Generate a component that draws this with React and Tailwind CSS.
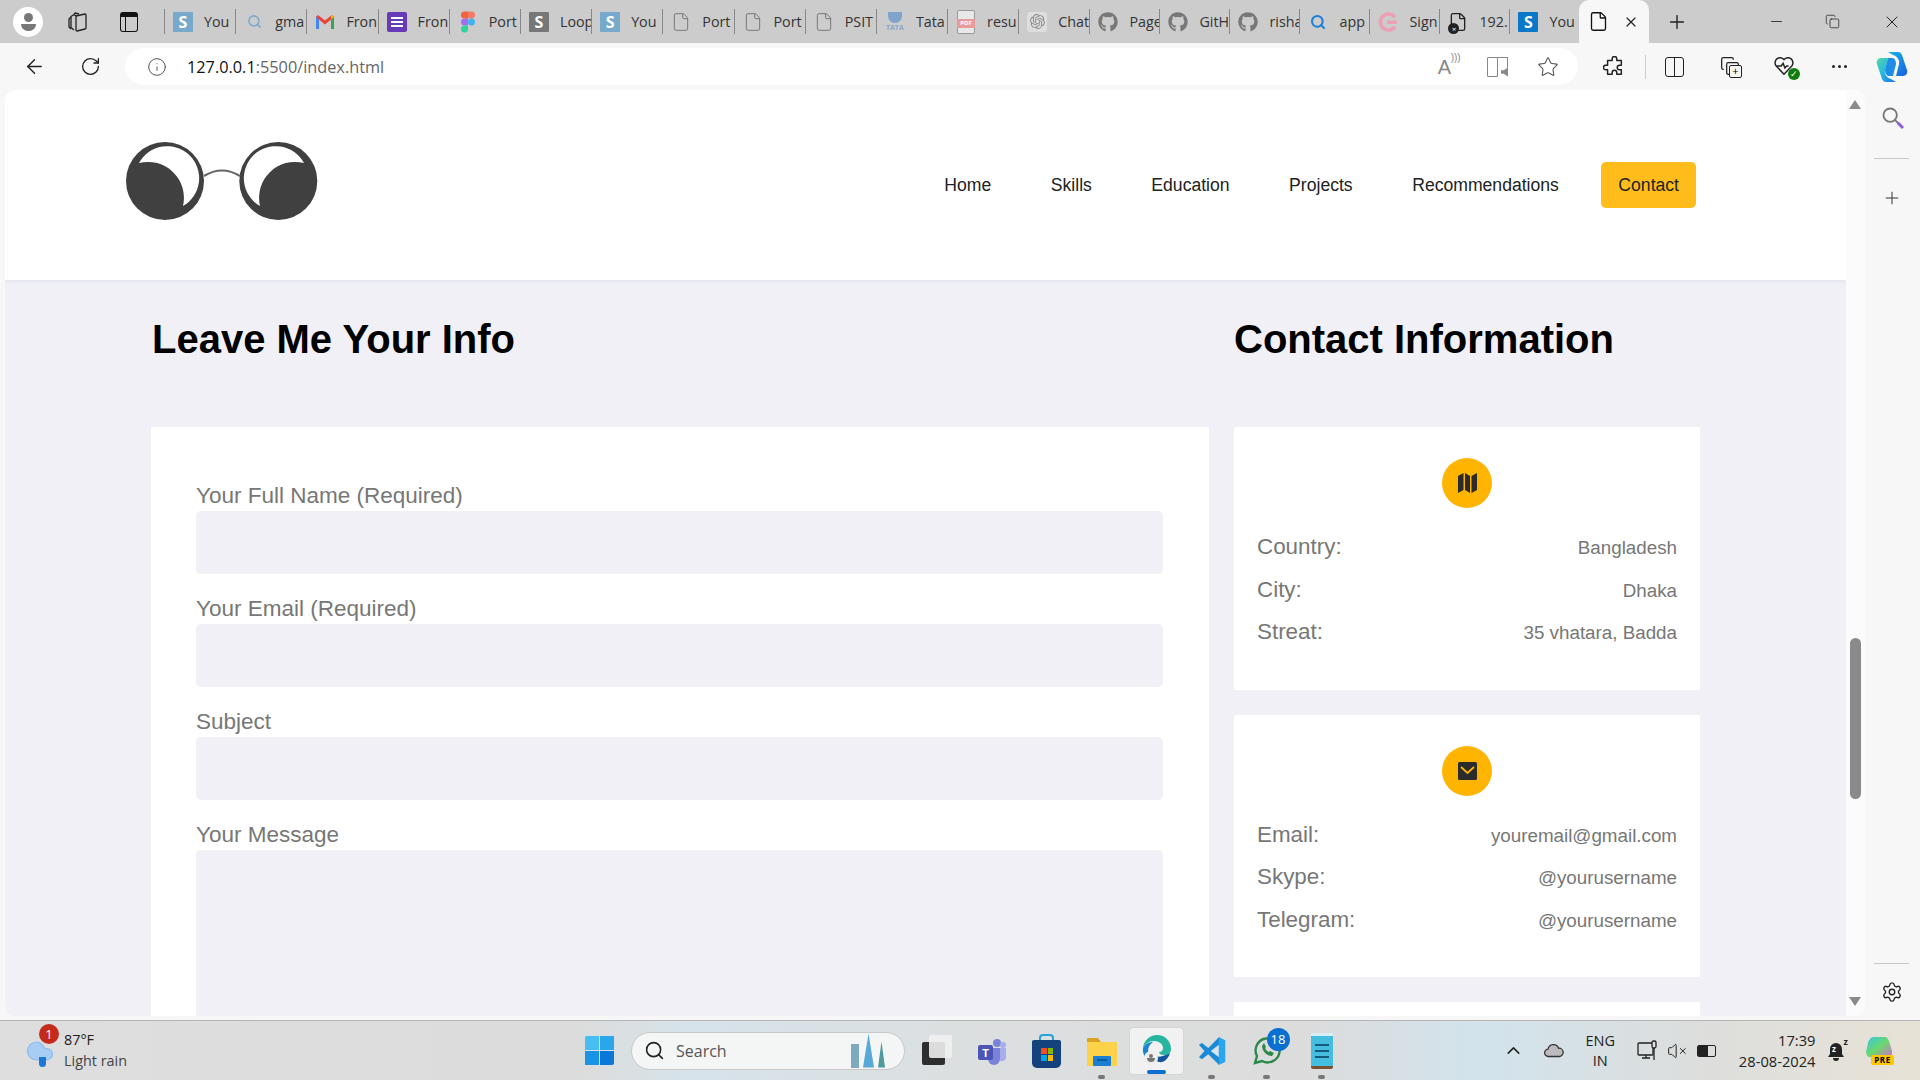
import { ArrowLeft, RotateCw, Info, Star, Plus, Minus, X, Settings, Search, File, ChevronUp, Cloud, VolumeX, Copy } from 'lucide-react'
import { FaGithub } from 'react-icons/fa'
import { SiOpenai } from 'react-icons/si'

const UI_FONT = "font-['Open_Sans','Noto_Sans',sans-serif]"

const STile = ({ bg }) => (
  <span className={`w-5 h-5 flex items-center justify-center text-white font-bold text-[16px] leading-none rounded-[1px] ${bg}`}>S</span>
)

const Gmail = () => (
  <svg width="20" height="20" viewBox="0 0 20 20" fill="none">
    <path d="M1 17V4.500L4 4v13z" fill="#4285f4" />
    <path d="M16 17V4l3 .5V17z" fill="#34a853" />
    <path d="M1 5l2-2 7 5.500L17 3l2 2-9 7.500z" fill="#ea4335" />
    <path d="M16 4l1-1 2 2-3 2.500z" fill="#fbbc04" />
  </svg>
)

const ListIcon = () => (
  <span className="w-5 h-5 rounded-[2px] bg-[#673ab7] flex flex-col items-center justify-center gap-[2px]">
    <span className="w-3 h-[2px] bg-white" />
    <span className="w-3 h-[2px] bg-white" />
    <span className="w-3 h-[2px] bg-white" />
  </span>
)

const FigmaIcon = () => (
  <svg width="14" height="22" viewBox="0 0 14 21">
    <path d="M7 0H3.500a3.500 3.500 0 0 0 0 7H7z" fill="#f0643c" />
    <path d="M7 0h3.500a3.500 3.500 0 0 1 0 7H7z" fill="#f47a6c" />
    <path d="M7 7H3.500a3.500 3.500 0 0 0 0 7H7z" fill="#a66cf0" />
    <circle cx="10.500" cy="10.500" r="3.500" fill="#3db4f0" />
    <path d="M7 14H3.500A3.500 3.500 0 1 0 7 17.500z" fill="#2ed598" />
  </svg>
)

const TataIcon = () => (
  <span className="w-5 h-5 flex flex-col items-center leading-none">
    <span className="w-[14px] h-[11px] rounded-b-full bg-[#7fa3cc]" />
    <span className="text-[7px] font-bold text-[#8aa6c8] mt-[1px]">TATA</span>
  </span>
)

const PdfIcon = () => (
  <span className="relative w-[18px] h-[24px] border border-[#999] bg-[#e8e8e8] rounded-[2px]">
    <span className="absolute left-[-1px] top-[8px] w-[18px] h-[9px] bg-[#e99a9a] text-white text-[6px] font-bold leading-[9px] text-center">PDF</span>
  </span>
)

const SigIcon = () => (
  <svg width="20" height="20" viewBox="0 0 20 20" fill="none">
    <path d="M17 5.500A8 8 0 1 0 17 14.500" stroke="#ee9fb4" strokeWidth="3.600" />
    <rect x="9" y="8.500" width="10" height="3.500" fill="#ee9fb4" />
  </svg>
)

const BlockedDoc = () => (
  <span className="relative w-5 h-6 flex items-center justify-center">
    <File size={20} strokeWidth={1.600} className="text-[#222]" />
    <span className="absolute left-0 bottom-0 w-[11px] h-[11px] rounded-full bg-[#222] text-white text-[8px] leading-[11px] text-center">×</span>
  </span>
)

const grayFile = <File size={20} strokeWidth={1.200} className="text-[#777]" />
const grayGit = <FaGithub size={20} className="text-[#777]" />

const TABS = [
  { icon: <STile bg="bg-[#76a9cb]" />, text: 'You' },
  { icon: <Search size={15} strokeWidth={2.500} className="text-[#82a9cc] mx-[2px]" />, text: 'gma' },
  { icon: <Gmail />, text: 'Fron' },
  { icon: <ListIcon />, text: 'Fron' },
  { icon: <FigmaIcon />, text: 'Port' },
  { icon: <STile bg="bg-[#777777]" />, text: 'Loop' },
  { icon: <STile bg="bg-[#76a9cb]" />, text: 'You' },
  { icon: grayFile, text: 'Port' },
  { icon: grayFile, text: 'Port' },
  { icon: grayFile, text: 'PSIT' },
  { icon: <TataIcon />, text: 'Tata' },
  { icon: <PdfIcon />, text: 'resu' },
  { icon: <span className="w-5 h-5 bg-[#dedede] rounded-[3px] flex items-center justify-center"><SiOpenai size={15} className="text-[#8a8a8a]" /></span>, text: 'Chat' },
  { icon: grayGit, text: 'Page' },
  { icon: grayGit, text: 'GitH' },
  { icon: grayGit, text: 'risha' },
  { icon: <Search size={16} strokeWidth={3} className="text-[#1e7fd8] mx-[2px]" />, text: 'app' },
  { icon: <SigIcon />, text: 'Sign' },
  { icon: <BlockedDoc />, text: '192.' },
  { icon: <STile bg="bg-[#0a78c8]" />, text: 'You' },
]

const Workspaces = () => (
  <svg width="22" height="22" viewBox="0 0 22 22" fill="none" stroke="#222" strokeWidth="1.300" strokeLinejoin="round">
    <path d="M9 5l9-2a1 1 0 0 1 1 1v13a1 1 0 0 1-1 1l-8 2a1 1 0 0 1-1-1z" />
    <path d="M9 5 7 3.500 4 5.500v11l3 2.500M7 3.500l1-1.500 4 1" />
    <path d="M4 6 2 8v8l2 2" />
  </svg>
)

function Tabs() {
  return (
    <div className={`h-[43px] bg-[#cccccc] flex items-center shrink-0 ${UI_FONT}`}>
      <div className="w-[164px] flex items-center shrink-0">
        <div className="ml-[13px] w-[30px] h-[30px] rounded-full bg-white flex flex-col items-center justify-center">
          <span className="w-[9px] h-[9px] rounded-full bg-[#777]" />
          <span className="w-[15px] h-[7px] mt-[2px] rounded-b-full rounded-t-[3px] bg-[#777]" />
        </div>
        <span className="ml-[24px]"><Workspaces /></span>
        <span className="ml-[31px] w-[18px] h-[20px] rounded-[3px] border-[1.500px] border-[#111] border-t-[5px] flex">
          <span className="w-[5px] h-full border-r-[1.500px] border-[#111]" />
        </span>
      </div>
      {TABS.map((t, i) => (
        <div key={i} className={`h-[25px] flex items-center border-l border-[#888] overflow-hidden shrink-0 ${i < 13 ? 'w-[71.2px]' : 'w-[70px]'}`}>
          <span className="w-5 ml-[8px] mr-[11px] flex items-center justify-center shrink-0">{t.icon}</span>
          <span className="text-[14.3px] text-[#333] whitespace-nowrap">{t.text}</span>
        </div>
      ))}
      <div className="w-[70px] h-full bg-[#f7f7f7] rounded-t-[10px] flex items-center shrink-0">
        <File size={21} strokeWidth={1.500} className="ml-[9px] text-[#111]" />
        <X size={16} strokeWidth={1.800} className="ml-[14px] text-[#222]" />
      </div>
      <Plus size={22} strokeWidth={1.500} className="ml-[17px] text-[#222]" />
      <Minus size={17} strokeWidth={1.200} className="ml-[80px] text-[#222]" />
      <Copy size={15} strokeWidth={1.200} className="ml-[40px] text-[#222]" />
      <X size={20} strokeWidth={1.200} className="ml-[42px] text-[#222]" />
    </div>
  )
}

const CopilotLogo = () => (
  <svg width="34" height="34" viewBox="0 0 34 34">
    <defs>
      <linearGradient id="cpa" x1="0" y1="0" x2="1" y2="1">
        <stop offset="0" stopColor="#19b8e8" />
        <stop offset="1" stopColor="#1a5fe0" />
      </linearGradient>
      <linearGradient id="cpb" x1="0" y1="0" x2="1" y2="1">
        <stop offset="0" stopColor="#4fdc9e" />
        <stop offset="0.500" stopColor="#25b4ea" />
        <stop offset="1" stopColor="#1f6fe8" />
      </linearGradient>
    </defs>
    <path d="M13 2h10c2 0 3 1 4 3l5 15c1 3-1 6-4 6h-7l3-12c1-4-2-8-6-9z" fill="url(#cpa)" />
    <path d="M21 32H11c-2 0-3-1-4-3L2 14c-1-3 1-6 4-6h7l-3 12c-1 4 2 8 6 9z" fill="url(#cpb)" />
    <path d="M13 8h5c2 1 3 3 3 6l-3 12h-5c-2-1-3-3-3-6z" fill="#1f8ce8" />
  </svg>
)

function Toolbar() {
  return (
    <div className={`h-[47px] bg-[#f7f7f7] flex items-center shrink-0 ${UI_FONT}`}>
      <ArrowLeft size={23} strokeWidth={1.500} className="ml-[23px] text-[#222]" />
      <RotateCw size={21} strokeWidth={1.500} className="ml-[34px] text-[#222]" />
      <div className="ml-[24px] w-[1453px] h-[37px] bg-white rounded-full flex items-center shrink-0">
        <Info size={20} strokeWidth={1.200} className="ml-[22px] text-[#555]" />
        <span className="ml-[20px] mt-[2px] text-[16.3px] text-[#111]">127.0.0.1<span className="text-[#666]">:5500/index.html</span></span>
        <span className="ml-auto mr-[36px] relative text-[20px] text-[#888] font-['Liberation_Sans',sans-serif]">A<span className="absolute top-[-2px] left-[13px] text-[10px]">)))</span></span>
        <span className="mr-[28px] relative w-[22px] h-[20px] flex">
          <span className="w-[11px] h-full border border-[#888] rounded-l-[1px]" />
          <span className="w-[10px] h-[12px] border-t border-r border-[#888]" />
          <span className="absolute right-[1px] bottom-0 w-[7px] h-[9px] bg-[#888] [clip-path:polygon(0_30%,40%_30%,100%_0,100%_100%,40%_70%,0_70%)]" />
        </span>
        <Star size={22} strokeWidth={1.200} className="mr-[19px] text-[#555]" />
      </div>
      <svg className="ml-[25px]" width="22" height="22" viewBox="0 0 24 24" fill="none" stroke="#222" strokeWidth="1.600" strokeLinejoin="round">
        <path d="M10 3a2.500 2.500 0 0 1 5 0v2h5v5h-2a2.500 2.500 0 0 0 0 5h2v5h-5v-2a2.500 2.500 0 0 0-5 0v2H5v-5H3a2.500 2.500 0 0 1 0-5h2V5h5z" />
      </svg>
      <span className="ml-[20px] w-[1px] h-[24px] bg-[#ccc]" />
      <span className="ml-[19px] w-[19px] h-[20px] border-[1.500px] border-[#222] rounded-[3px] flex">
        <span className="w-1/2 border-r-[1.500px] border-[#222]" />
      </span>
      <span className="ml-[36px] relative w-[22px] h-[22px]">
        <Copy size={20} strokeWidth={1.500} className="absolute text-[#222]" />
        <span className="absolute right-0 bottom-0 w-[13px] h-[13px] bg-[#f7f7f7] border-[1.500px] border-[#222] rounded-[2px] text-[11px] leading-[9px] text-center">+</span>
      </span>
      <span className="ml-[31px] relative w-[24px] h-[24px]">
        <svg width="22" height="22" viewBox="0 0 24 24" fill="none" stroke="#222" strokeWidth="1.600">
          <path d="M12 21 3.500 12a5.500 5.500 0 0 1 8.500-7 5.500 5.500 0 0 1 8.500 7z" />
          <path d="M4 12h5l2-3 2 5 2-2h2" />
        </svg>
        <span className="absolute right-[-3px] bottom-[-1px] w-[12px] h-[12px] rounded-full bg-[#107c10] text-white text-[9px] leading-[12px] text-center">✓</span>
      </span>
      <span className="ml-[35px] flex gap-[3px]">
        <span className="w-[3px] h-[3px] rounded-full bg-[#222]" />
        <span className="w-[3px] h-[3px] rounded-full bg-[#222]" />
        <span className="w-[3px] h-[3px] rounded-full bg-[#222]" />
      </span>
      <span className="ml-[28px]"><CopilotLogo /></span>
    </div>
  )
}

const Logo = () => (
  <svg width="194" height="80" viewBox="0 0 194 80" fill="none">
    <circle cx="40" cy="40" r="39" fill="#404040" />
    <path d="M14 22 A32 32 0 1 1 58 65 A36 36 0 0 0 14 22Z" fill="#fff" />
    <circle cx="153.300" cy="40" r="39" fill="#404040" />
    <path d="M179 22 A32 32 0 1 0 135 65 A36 36 0 0 1 179 22Z" fill="#fff" />
    <path d="M79 35 Q97 24 115 35" stroke="#666" strokeWidth="2.200" />
  </svg>
)

const NAV = ['Home', 'Skills', 'Education', 'Projects', 'Recommendations']

function Header() {
  return (
    <header className="h-[190px] bg-white flex items-start pl-[120px] pr-[150px] shrink-0 shadow-[0_1px_4px_rgba(90,110,200,0.12)] relative">
      <div className="mt-[51px]"><Logo /></div>
      <nav className="ml-auto mt-[72px] flex items-center gap-[25.500px] text-[17.6px] text-[#222]">
        {NAV.map((n) => (
          <a key={n} className="px-[17px] leading-[46px]">{n}</a>
        ))}
        <a className="px-[17px] leading-[46px] bg-[#ffbc1a] rounded-[5px]">Contact</a>
      </nav>
    </header>
  )
}

const FIELDS = ['Your Full Name (Required)', 'Your Email (Required)', 'Subject', 'Your Message']

function FormCard() {
  return (
    <div className="w-[1058px] bg-white px-[45px] pt-[56px] pb-[40px] shrink-0">
      {FIELDS.map((f, i) => (
        <div key={f} className="mb-[22px]">
          <label className="block text-[22.500px] leading-[26px] mb-[2px] text-[#777777]">{f}</label>
          <div className={`w-[967px] bg-[#f0f0f6] rounded-[5px] ${i === 3 ? 'h-[240px]' : 'h-[63px]'}`} />
        </div>
      ))}
    </div>
  )
}

const MapGlyph = () => (
  <svg width="19" height="20" viewBox="0 0 19 20" fill="#2b2b2b">
    <path d="M0 3l5.500-3v17L0 20zM7 0l5 3v17l-5-3zM13.500 3 19 0v17l-5.500 3z" />
  </svg>
)

const MailGlyph = () => (
  <svg width="19" height="18" viewBox="0 0 19 18">
    <rect width="19" height="18" rx="1.500" fill="#2b2b2b" />
    <path d="M3 5l6.500 6L16 5" stroke="#ffb400" strokeWidth="1.800" fill="none" />
  </svg>
)

const CARDS = [
  {
    icon: <MapGlyph />,
    rows: [['Country:', 'Bangladesh'], ['City:', 'Dhaka'], ['Streat:', '35 vhatara, Badda']],
  },
  {
    icon: <MailGlyph />,
    rows: [['Email:', 'youremail@gmail.com'], ['Skype:', '@yourusername'], ['Telegram:', '@yourusername']],
  },
]

function InfoCard({ icon, rows }) {
  return (
    <div className="h-[262.500px] bg-white pt-[31px] px-[23px]">
      <div className="w-[50px] h-[50px] mx-auto rounded-full bg-[#ffb400] flex items-center justify-center">{icon}</div>
      <div className="mt-[18px]">
        {rows.map(([k, v]) => (
          <div key={k} className="h-[42.500px] flex items-center justify-between">
            <span className="text-[22.400px] text-[#777777]">{k}</span>
            <span className="text-[18.800px] text-[#777777] mt-[2px]">{v}</span>
          </div>
        ))}
      </div>
    </div>
  )
}

function Page() {
  return (
    <main className="flex-1 min-w-0 h-full overflow-hidden flex flex-col font-['Liberation_Sans',sans-serif]">
      <Header />
      <section className="flex-1 bg-[#f0f0f6] pl-[146px] overflow-hidden">
        <div className="flex gap-[25px]">
          <div className="w-[1058px]">
            <h2 className="ml-[1px] mt-[36px] h-[111px] text-[40px] leading-[46px] font-bold text-black">Leave Me Your Info</h2>
            <FormCard />
          </div>
          <div className="w-[466px]">
            <h2 className="mt-[36px] h-[111px] text-[40px] leading-[46px] font-bold text-black">Contact Information</h2>
            <div className="flex flex-col gap-[25px]">
              {CARDS.map((c) => (
                <InfoCard key={c.rows[0][0]} icon={c.icon} rows={c.rows} />
              ))}
              <div className="h-[262px] bg-white" />
            </div>
          </div>
        </div>
      </section>
    </main>
  )
}

function Scrollbar() {
  return (
    <div className="relative w-[19px] h-full bg-[#fbfbfb] shrink-0">
      <span className="absolute left-[3px] top-[10px] w-0 h-0 border-x-[6px] border-x-transparent border-b-[9px] border-b-[#8a8a8a]" />
      <span className="absolute left-[4px] top-[548px] w-[11px] h-[161px] rounded-full bg-[#8a8a8a]" />
      <span className="absolute left-[3px] bottom-[10px] w-0 h-0 border-x-[6px] border-x-transparent border-t-[9px] border-t-[#8a8a8a]" />
    </div>
  )
}

function Sidebar() {
  return (
    <aside className="w-[55px] h-full bg-[#f7f7f7] flex flex-col items-center pr-[2px] shrink-0">
      <span className="relative mt-[16px] w-[22px] h-[22px]">
        <Search size={20} strokeWidth={2.200} className="text-[#777]" />
        <span className="absolute right-[-1px] bottom-[1px] w-[7px] h-[3px] bg-[#8f5fd6] rotate-45" />
      </span>
      <span className="mt-[30px] w-[35px] h-[1px] bg-[#c8c8c8]" />
      <Plus size={20} strokeWidth={1.200} className="mt-[29px] text-[#333]" />
      <span className="mt-auto w-[35px] h-[1px] bg-[#c8c8c8]" />
      <Settings size={22} strokeWidth={1.500} className="mt-[17px] mb-[17px] text-[#222]" />
    </aside>
  )
}

function WindowsLogo() {
  return (
    <span className="grid grid-cols-2 gap-[1px] w-[29px] h-[29px]">
      <span className="bg-[#48bdf2] rounded-tl-[2px]" />
      <span className="bg-[#2aa7ea]" />
      <span className="bg-[#1a93e4]" />
      <span className="bg-[#0a78d8] rounded-br-[2px]" />
    </span>
  )
}

const TaskView = () => (
  <span className="relative w-[30px] h-[30px] -translate-y-[1px]">
    <span className="absolute left-0 bottom-0 w-[23px] h-[23px] bg-[#2e2e2e] rounded-[2px]" />
    <span className="absolute right-0 top-0 w-[23px] h-[23px] bg-[#f0f0f0]/90 rounded-[2px]" />
  </span>
)

const Teams = () => (
  <svg width="30" height="30" viewBox="0 0 30 30">
    <circle cx="20" cy="7" r="4" fill="#7b83d9" />
    <circle cx="26" cy="9" r="3" fill="#a6acec" />
    <path d="M18 12h11v8a4 4 0 0 1-8 2h-3z" fill="#a6acec" />
    <path d="M11 12h12v11a6 6 0 0 1-12 0z" fill="#7b83d9" />
    <rect x="1" y="9" width="15" height="15" rx="2" fill="#4c54b5" />
    <text x="8.500" y="20.500" fill="#fff" fontSize="11" fontWeight="700" textAnchor="middle" fontFamily="Liberation Sans">T</text>
  </svg>
)

const Store = () => (
  <span className="relative w-[29px] h-[34px]">
    <span className="absolute left-[7px] top-0 w-[15px] h-[10px] rounded-t-[4px] border-2 border-[#27a3dc] border-b-0" />
    <span className="absolute left-0 top-[6px] w-[29px] h-[28px] rounded-b-[5px] rounded-t-[2px] bg-[#14427c]" />
    <span className="absolute left-[9px] top-[14px] grid grid-cols-2 gap-[1px] w-[12px] h-[13px]">
      <span className="bg-[#f25022]" />
      <span className="bg-[#7fba00]" />
      <span className="bg-[#00a4ef]" />
      <span className="bg-[#ffb900]" />
    </span>
  </span>
)

const Explorer = () => (
  <svg width="30" height="30" viewBox="0 0 30 30">
    <path d="M0 2h11l3 4h-14z" fill="#d8a422" />
    <path d="M0 6h30v24H0z" fill="#fcd24b" />
    <rect x="6" y="20" width="18" height="10" rx="1" fill="#1b7fd1" />
    <rect x="10" y="23" width="10" height="2" fill="#0d5aa0" />
  </svg>
)

const Edge = () => (
  <span className="relative w-[30px] h-[34px]">
    <svg width="30" height="30" viewBox="0 0 30 30">
      <path d="M1 14C2 5 9 1 15 1c8 0 14 6 14 14 0 4-3 6-7 6-3 0-5-1-5-3 3 0 4-2 4-4 0-4-4-7-9-7-5 0-9 3-11 7z" fill="#27b5a0" />
      <path d="M1 14c2-4 6-6 10-6-3 2-5 5-5 9 0 5 4 10 10 11C7 29 0 23 1 14z" fill="#1785d3" />
      <path d="M17 28c-5-1-9-5-9-10 3 5 9 7 20 1-2 6-6 10-11 9z" fill="#15559e" />
    </svg>
    <span className="absolute left-[2px] top-[17px] w-[14px] h-[14px] rounded-full bg-[#eeeeee] flex flex-col items-center justify-center">
      <span className="w-[4px] h-[4px] rounded-full bg-[#777]" />
      <span className="w-[8px] h-[4px] rounded-b-full bg-[#777]" />
    </span>
  </span>
)

const VSCode = () => (
  <svg width="30" height="30" viewBox="0 0 24 24">
    <path d="M17.500 1 9 9.500 4 5.500 1.500 7l4.500 5-4.500 5L4 18.500l5-4 8.500 8.500 5-2.500V3.500z" fill="#1a8ad6" />
    <path d="M17.500 7v10l-6.500-5z" fill="#d9e5ea" />
    <path d="M17.500 1l5 2.500v17l-5 2.500z" fill="#29a6ee" />
  </svg>
)

const Whatsapp = () => (
  <span className="relative w-[30px] h-[30px]">
    <svg width="30" height="30" viewBox="0 0 30 30" fill="none">
      <path d="M3 27l2-7A12 12 0 1 1 10 25z" stroke="#2a8a4a" strokeWidth="2.400" />
      <path d="M10 10c0 5 5 10 10 10l2-3-4-2-1 1c-2-1-3-2-4-4l1-1-2-4z" fill="#2a8a4a" />
    </svg>
    <span className={`absolute right-[-8px] top-[-8px] w-[23px] h-[23px] rounded-full bg-[#0a6fd1] text-white text-[13px] leading-[23px] text-center ${UI_FONT}`}>18</span>
  </span>
)

const Notepad = () => (
  <span className="relative w-[22px] h-[36px] bg-[#45bde0] rounded-[2px] flex flex-col items-center justify-center gap-[4px] border-b-[3px] border-b-[#7a5230] border-t-[3px] border-t-[#d9eef5]">
    <span className="w-[14px] h-[2px] bg-[#17587e]" />
    <span className="w-[14px] h-[2px] bg-[#17587e]" />
    <span className="w-[14px] h-[2px] bg-[#17587e]" />
  </span>
)

const TASK_APPS = [
  { el: <TaskView /> },
  { el: <Teams /> },
  { el: <Store /> },
  { el: <Explorer />, dot: true },
  { el: <Edge />, active: true },
  { el: <VSCode />, dot: true },
  { el: <Whatsapp />, dot: true },
  { el: <Notepad />, dot: true },
]

function Taskbar() {
  return (
    <footer className={`h-[60px] shrink-0 border-t border-[#b5b5b5] flex items-center bg-[linear-gradient(90deg,#dedede_0%,#dcdcdc_30%,#d6e3ea_36%,#dcdfe0_50%,#dcdcdc_68%,#d2e3ec_77%,#dcdedd_88%,#e8e2d6_100%)] ${UI_FONT}`}>
      <div className="w-[585px] flex items-center shrink-0">
        <span className="relative ml-[25px] w-[30px] h-[30px]">
          <Cloud size={30} strokeWidth={1} className="text-[#8fbcec] fill-[#a8cdf5]" />
          <span className="absolute left-[14px] top-[21px] w-[7px] h-[10px] rounded-b-full bg-[#1b78d8]" />
          <span className="absolute left-[14px] top-[-12px] w-[20px] h-[20px] rounded-full bg-[#c42b1c] text-white text-[13px] leading-[20px] text-center">1</span>
        </span>
        <div className="ml-[9px] -mt-[1px] text-[14.400px] leading-[21px]">
          <div className="text-[#222]">87°F</div>
          <div className="text-[#444]">Light rain</div>
        </div>
      </div>
      <WindowsLogo />
      <div className="ml-[17px] w-[274px] h-[38px] rounded-full bg-[#f4f6f6] border border-[#c8c8c8] flex items-center shrink-0">
        <Search size={21} strokeWidth={1.800} className="ml-[12px] text-[#222]" />
        <span className="ml-[11px] text-[16px] text-[#555]">Search</span>
        <span className="ml-auto mr-[19px] flex items-end gap-[4px] h-[34px]">
          <span className="w-[8px] h-[24px] bg-[#7fa9bd]" />
          <span className="w-[11px] h-[34px] bg-[#58a9d8] [clip-path:polygon(50%_0,100%_100%,0_100%)]" />
          <span className="w-[7px] h-[26px] bg-[#4f9a9f] [clip-path:polygon(50%_0,100%_100%,0_100%)]" />
        </span>
      </div>
      <div className="ml-[4px] flex items-center">
        {TASK_APPS.map((a, i) => (
          <div key={i} className={`relative w-[55px] h-[48px] flex items-center justify-center ${a.active ? 'bg-white/60 rounded-[4px] border border-[#d5d5d5]' : ''}`}>
            {a.el}
            {a.dot && <span className="absolute bottom-[-4px] w-[7px] h-[4px] rounded-full bg-[#777]" />}
            {a.active && <span className="absolute bottom-0 w-[19px] h-[4px] rounded-full bg-[#0a6fd1]" />}
          </div>
        ))}
      </div>
      <ChevronUp size={21} strokeWidth={1.800} className="ml-[153.500px] text-[#222]" />
      <svg className="ml-[19.500px]" width="22" height="22" viewBox="0 0 24 24" fill="#bbb" stroke="#333" strokeWidth="1.400">
        <path d="M6 18a4 4 0 0 1-.5-8A6 6 0 0 1 17 9a4.500 4.500 0 0 1 1 9z" />
      </svg>
      <div className="ml-[20.500px] text-[14.500px] leading-[20px] text-center text-[#222]">
        <div>ENG</div>
        <div>IN</div>
      </div>
      <svg className="ml-[21.500px]" width="22" height="22" viewBox="0 0 22 22" fill="none" stroke="#222" strokeWidth="1.300">
        <rect x="1" y="3" width="15" height="12" rx="1" />
        <path d="M5 18h8M9 15v3" />
        <rect x="15" y="1" width="4" height="7" rx="1.500" fill="#ddd" />
        <path d="M17 8v12" />
      </svg>
      <VolumeX size={20} strokeWidth={1.200} className="ml-[8px] text-[#222]" />
      <span className="ml-[10px] relative w-[19px] h-[12px] border-[1.500px] border-[#222] rounded-[2px]">
        <span className="absolute left-0 top-0 w-[10px] h-full bg-[#222]" />
      </span>
      <div className="ml-auto mr-[10.500px] text-right text-[14.700px] leading-[21px] text-[#222]">
        <div>17:39</div>
        <div>28-08-2024</div>
      </div>
      <span className="relative w-5 h-[22px]">
        <svg width="20" height="22" viewBox="0 0 20 22" fill="#222">
          <path d="M10 3a6 6 0 0 1 6 6v5l2 3H2l2-3V9a6 6 0 0 1 6-6zM7 18h6a3 3 0 0 1-6 0z" />
        </svg>
        <span className="absolute left-[6px] top-[4px] text-[8px] leading-[10px] font-bold text-white">z</span>
        <span className="absolute right-[-2px] top-[-3px] text-[9px] leading-[10px] font-bold text-[#222]">z</span>
      </span>
      <span className="ml-[19px] mr-[25px] relative w-[30px] h-[30px]">
        <svg width="28" height="24" viewBox="0 0 30 26">
          <defs>
            <linearGradient id="cpp" x1="0" y1="0" x2="1" y2="1">
              <stop offset="0" stopColor="#36c5e8" />
              <stop offset="0.500" stopColor="#6bd96b" />
              <stop offset="1" stopColor="#d56ad8" />
            </linearGradient>
          </defs>
          <path d="M10 1h11c3 0 4 2 5 5l3 10c1 4-1 7-4 7H6c-3 0-5-2-5-6l2-9c1-5 4-7 7-7z" fill="url(#cpp)" />
        </svg>
        <span className="absolute left-[6px] bottom-[1px] w-[23px] h-[10px] rounded-[2px] bg-[#ffc800] text-[8px] leading-[10px] font-bold text-center tracking-[0.5px] text-black">PRE</span>
      </span>
    </footer>
  )
}

export default function App() {
  return (
    <div className="w-[1920px] h-[1080px] flex flex-col overflow-hidden">
      <Tabs />
      <Toolbar />
      <div className="h-[930px] bg-[#f7f7f7] flex shrink-0">
        <div className="flex-1 min-w-0 ml-[5px] h-[926px] rounded-[10px] overflow-hidden flex">
          <Page />
          <Scrollbar />
        </div>
        <Sidebar />
      </div>
      <Taskbar />
    </div>
  )
}
